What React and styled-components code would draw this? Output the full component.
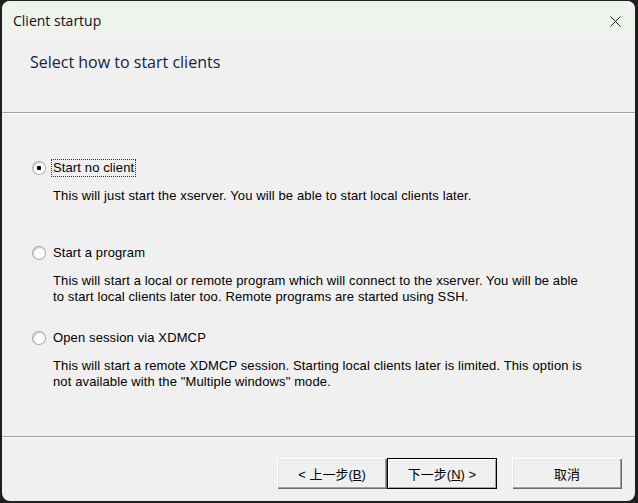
import styled, { createGlobalStyle } from "styled-components";

const GlobalStyle = createGlobalStyle`
  html, body {
    margin: 0;
    padding: 0;
    background: #1f1f1f;
  }
  body {
    width: 638px;
    height: 503px;
    overflow: hidden;
  }
`;

const options = [
  {
    label: "Start no client",
    checked: true,
    lines: ["This will just start the xserver. You will be able to start local clients later."],
  },
  {
    label: "Start a program",
    lines: [
      "This will start a local or remote program which will connect to the xserver. You will be able",
      "to start local clients later too. Remote programs are started using SSH.",
    ],
  },
  {
    label: "Open session via XDMCP",
    lines: [
      "This will start a remote XDMCP session. Starting local clients later is limited. This option is",
      "not available with the \"Multiple windows\" mode.",
    ],
  },
];

const App = () => {
  return (
    <>
      <GlobalStyle />
      <Frame>
        <Window>
          <TitleBar>
            <Title>Client startup</Title>
            <Close>
              <svg width="11" height="11" viewBox="0 0 11 11">
                <path d="M0.5 0.5 L10.5 10.5 M10.5 0.5 L0.5 10.5" stroke="#1a1a1a" strokeWidth="1" />
              </svg>
            </Close>
          </TitleBar>
          <Header>
            <HeaderText>Select how to start clients</HeaderText>
          </Header>
          <Etched />
          <Body>
            {options.map((opt, i) => (
              <Option key={i}>
                <RadioRow>
                  <Radio checked={opt.checked} />
                  <Label $focused={opt.checked}>{opt.label}</Label>
                </RadioRow>
                <Desc>
                  {opt.lines.map((l, j) => (
                    <div key={j}>{l}</div>
                  ))}
                </Desc>
              </Option>
            ))}
          </Body>
          <Etched />
          <Footer>
            <Button>&lt; 上一步(<u>B</u>)</Button>
            <Button $primary>下一步(<u>N</u>) &gt;</Button>
            <Button $cancel>取消</Button>
          </Footer>
        </Window>
      </Frame>
    </>
  );
};

const Frame = styled.div`
  width: 638px;
  height: 503px;
  padding: 1px 3px 2px 2px;
  box-sizing: border-box;
`;

const Window = styled.div`
  height: 100%;
  background: #f0f0f0;
  border-radius: 8px;
  overflow: hidden;
  display: flex;
  flex-direction: column;
`;

const TitleBar = styled.div`
  height: 39px;
  background: #eef3ee;
  display: flex;
  align-items: center;
  justify-content: space-between;
  padding: 0 14px 0 11px;
  flex-shrink: 0;
`;

const Title = styled.div`
  font-family: "Open Sans", "Noto Sans", sans-serif;
  font-size: 14px;
  color: #111;
`;

const Close = styled.div`
  display: flex;
  align-items: center;
  margin-top: 2px;
`;

const Header = styled.div`
  height: 72px;
  padding: 11px 0 0 28px;
  box-sizing: border-box;
  flex-shrink: 0;
`;

const HeaderText = styled.div`
  font-family: "Open Sans", "Noto Sans", sans-serif;
  font-size: 16px;
  color: #16204a;
`;

const Etched = styled.div`
  height: 1px;
  background: #a0a0a0;
  border-bottom: 1px solid #ffffff;
  flex-shrink: 0;
`;

const Body = styled.div`
  flex: 1;
  padding: 46px 0 0 30px;
  display: flex;
  flex-direction: column;
  font-family: "Liberation Sans", Arial, sans-serif;
  font-size: 13px;
  letter-spacing: 0.12px;
  color: #000;
`;

const Option = styled.div`
  height: 85px;
  display: flex;
  flex-direction: column;
  gap: 12px;
`;

const RadioRow = styled.div`
  display: flex;
  align-items: center;
  gap: 7px;
  height: 16px;
`;

const Radio = styled.span`
  width: 12px;
  height: 12px;
  border-radius: 50%;
  background: ${(p) => (p.checked ? "radial-gradient(circle, #000 0 2px, #fff 2.5px)" : "#fff")};
  box-shadow: 0 0 0 1px #a8a8a8, inset 1px 1px 1px #c8c8c8;
  margin-left: 1px;
  flex-shrink: 0;
`;

const Label = styled.span`
  padding: 0 1px;
  line-height: 16px;
  outline: ${(p) => (p.$focused ? "1px dotted #333" : "none")};
`;

const Desc = styled.div`
  padding-left: 21px;
  line-height: 16px;
`;

const Footer = styled.div`
  height: 63px;
  display: flex;
  align-items: flex-start;
  padding: 20px 0 0 275px;
  box-sizing: border-box;
  flex-shrink: 0;
`;

const Button = styled.button`
  width: 110px;
  height: 31px;
  margin-left: ${(p) => (p.$cancel ? "15px" : "0")};
  background: #f0f0f0;
  border: none;
  padding: 0;
  font-family: "Liberation Sans", "Noto Sans CJK SC", sans-serif;
  font-size: 13px;
  color: #000;
  box-shadow: ${(p) =>
    p.$primary
      ? "inset 0 0 0 1px #000, inset 1px 1px 0 1px #fff, inset -2px -2px 0 0 #a0a0a0"
      : "inset 1px 1px 0 #fff, inset -1px -1px 0 #696969, inset -2px -2px 0 #a0a0a0, inset 2px 2px 0 #e3e3e3"};
  u {
    text-decoration: underline;
  }
`;

export default App;
